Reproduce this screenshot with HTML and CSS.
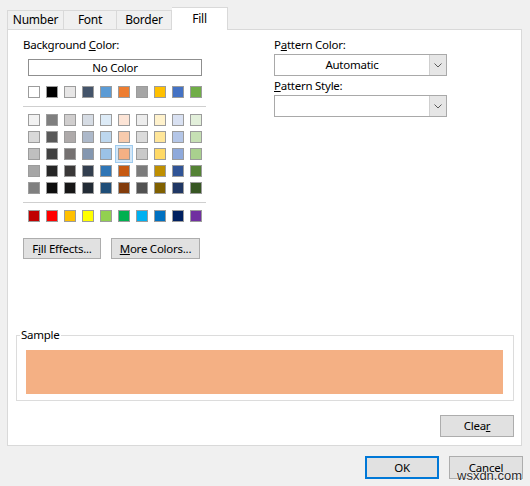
FILE: index.html
```html
<!DOCTYPE html>
<html>
<head>
<meta charset="utf-8">
<link rel="stylesheet" href="styles.css">
</head>
<body>
<div class="dialog">
  <div class="tabs">
    <div class="tab tab-first tab-number">Number</div>
    <div class="tab tab-font">Font</div>
    <div class="tab tab-border">Border</div>
    <div class="tab tab-fill active">Fill</div>
  </div>
  <div class="panel">
    <div class="columns">
      <div class="bg-col">
        <div class="label">Background <u>C</u>olor:</div>
        <button class="nocolor">No Color</button>
        <div class="swrow row-top">
          <span class="sw" style="background:#ffffff"></span>
          <span class="sw" style="background:#000000"></span>
          <span class="sw" style="background:#e7e6e6"></span>
          <span class="sw" style="background:#44546a"></span>
          <span class="sw" style="background:#5b9bd5"></span>
          <span class="sw" style="background:#ed7d31"></span>
          <span class="sw" style="background:#a5a5a5"></span>
          <span class="sw" style="background:#ffc000"></span>
          <span class="sw" style="background:#4472c4"></span>
          <span class="sw" style="background:#70ad47"></span>
        </div>
        <div class="sep"></div>
        <div class="grid">
          <span class="sw" style="background:#f2f2f2"></span>
          <span class="sw" style="background:#7f7f7f"></span>
          <span class="sw" style="background:#d0cece"></span>
          <span class="sw" style="background:#d6dce4"></span>
          <span class="sw" style="background:#ddebf7"></span>
          <span class="sw" style="background:#fce4d6"></span>
          <span class="sw" style="background:#ededed"></span>
          <span class="sw" style="background:#fff2cc"></span>
          <span class="sw" style="background:#d9e1f2"></span>
          <span class="sw" style="background:#e2efda"></span>

          <span class="sw" style="background:#d9d9d9"></span>
          <span class="sw" style="background:#595959"></span>
          <span class="sw" style="background:#aeaaaa"></span>
          <span class="sw" style="background:#adb9ca"></span>
          <span class="sw" style="background:#bdd7ee"></span>
          <span class="sw" style="background:#f8cbad"></span>
          <span class="sw" style="background:#dbdbdb"></span>
          <span class="sw" style="background:#ffe699"></span>
          <span class="sw" style="background:#b4c6e7"></span>
          <span class="sw" style="background:#c6e0b4"></span>

          <span class="sw" style="background:#bfbfbf"></span>
          <span class="sw" style="background:#404040"></span>
          <span class="sw" style="background:#757171"></span>
          <span class="sw" style="background:#8497b0"></span>
          <span class="sw" style="background:#9bc2e6"></span>
          <span class="sw sel" style="background:#f4b084"></span>
          <span class="sw" style="background:#c9c9c9"></span>
          <span class="sw" style="background:#ffd966"></span>
          <span class="sw" style="background:#8ea9db"></span>
          <span class="sw" style="background:#a9d08e"></span>

          <span class="sw" style="background:#a6a6a6"></span>
          <span class="sw" style="background:#262626"></span>
          <span class="sw" style="background:#3a3838"></span>
          <span class="sw" style="background:#333f4f"></span>
          <span class="sw" style="background:#2f75b5"></span>
          <span class="sw" style="background:#c65911"></span>
          <span class="sw" style="background:#7b7b7b"></span>
          <span class="sw" style="background:#bf8f00"></span>
          <span class="sw" style="background:#305496"></span>
          <span class="sw" style="background:#548235"></span>

          <span class="sw" style="background:#808080"></span>
          <span class="sw" style="background:#0d0d0d"></span>
          <span class="sw" style="background:#171616"></span>
          <span class="sw" style="background:#222b35"></span>
          <span class="sw" style="background:#1f4e78"></span>
          <span class="sw" style="background:#833c0c"></span>
          <span class="sw" style="background:#525252"></span>
          <span class="sw" style="background:#806000"></span>
          <span class="sw" style="background:#203764"></span>
          <span class="sw" style="background:#375623"></span>
        </div>
        <div class="sep"></div>
        <div class="swrow">
          <span class="sw" style="background:#c00000"></span>
          <span class="sw" style="background:#ff0000"></span>
          <span class="sw" style="background:#ffc000"></span>
          <span class="sw" style="background:#ffff00"></span>
          <span class="sw" style="background:#92d050"></span>
          <span class="sw" style="background:#00b050"></span>
          <span class="sw" style="background:#00b0f0"></span>
          <span class="sw" style="background:#0070c0"></span>
          <span class="sw" style="background:#002060"></span>
          <span class="sw" style="background:#7030a0"></span>
        </div>
        <div class="btnrow">
          <button class="btn btn-effects">F<u>i</u>ll Effects...</button>
          <button class="btn btn-more"><u>M</u>ore Colors...</button>
        </div>
      </div>
      <div class="pat-col">
        <div class="label">P<u>a</u>ttern Color:</div>
        <div class="combo">
          <span class="combo-val">Automatic</span>
          <span class="combo-arrow"><svg width="8" height="5" viewBox="0 0 8 5"><polyline points="0.5,0.5 4,4 7.5,0.5" fill="none" stroke="#5a5a5a" stroke-width="1"/></svg></span>
        </div>
        <div class="label label-2"><u>P</u>attern Style:</div>
        <div class="combo">
          <span class="combo-val"></span>
          <span class="combo-arrow"><svg width="8" height="5" viewBox="0 0 8 5"><polyline points="0.5,0.5 4,4 7.5,0.5" fill="none" stroke="#5a5a5a" stroke-width="1"/></svg></span>
        </div>
      </div>
    </div>
    <fieldset class="sample">
      <legend>Sample</legend>
      <div class="sample-fill"></div>
    </fieldset>
    <div class="clear-row">
      <button class="btn btn-clear">Clea<u>r</u></button>
    </div>
  </div>
  <div class="footer">
    <button class="btn btn-ok">OK</button>
    <button class="btn btn-cancel">Cancel</button>
  </div>
  <div class="watermark">wsxdn.com</div>
</div>
</body>
</html>
```
FILE: styles.css
```css
html, body {
  margin: 0;
  padding: 0;
  background: #f0f0f0;
}
body {
  font-family: "Noto Sans", "Open Sans", sans-serif;
  font-size: 11.5px;
  letter-spacing: -0.25px;
  color: #000;
}
.dialog {
  position: relative;
  width: 530px;
  height: 486px;
  overflow: hidden;
}
u { text-decoration: underline; text-underline-offset: 1px; }

/* tabs */
.tabs {
  display: flex;
  align-items: flex-end;
  height: 29px;
  padding-left: 7px;
  box-sizing: border-box;
}
.tab {
  box-sizing: border-box;
  height: 19px;
  border-top: 1px solid #d9d9d9;
  border-right: 1px solid #d9d9d9;
  display: flex;
  align-items: center;
  justify-content: center;
  line-height: 1;
  font-size: 12px;
}
.tab-first { border-left: 1px solid #d9d9d9; }
.tab-number { width: 57px; }
.tab-font { width: 53px; }
.tab-border { width: 55px; }
.tab-fill { width: 56px; }
.tab.active {
  height: 23px;
  margin-bottom: -1px;
  background: #fff;
  position: relative;
  z-index: 1;
  padding-bottom: 1px;
}

/* panel */
.panel {
  box-sizing: border-box;
  height: 417px;
  margin: 0 8px 0 7px;
  border: 1px solid #d9d9d9;
  background: #fff;
  display: flex;
  flex-direction: column;
  padding: 7px 7px 8px 8px;
}
.columns {
  display: flex;
  padding-left: 7px;
}
.bg-col { width: 183px; }
.pat-col { width: 173px; margin-left: 68px; }
.label {
  height: 16px;
  line-height: 16px;
  white-space: nowrap;
}
.label-2 { margin-top: 2px; }

.nocolor {
  display: block;
  box-sizing: border-box;
  margin: 6px 0 0 5px;
  width: 174px;
  height: 17px;
  padding: 0;
  border: 1px solid #8f8f8f;
  background: #fff;
  font: inherit;
  letter-spacing: inherit;
  line-height: 14px;
  color: #000;
}
.swrow {
  display: flex;
  gap: 6px;
  margin-left: 5px;
}
.row-top { margin-top: 10px; }
.sw {
  display: block;
  box-sizing: border-box;
  width: 12px;
  height: 12px;
  border: 1px solid #9c9c9c;
}
.sw.sel {
  box-shadow: 0 0 0 2px #d3e7f8, 0 0 0 3px #9fcbee;
}
.sep {
  height: 1px;
  background: #cfcfcf;
  margin: 8px 0 7px;
}
.grid {
  display: grid;
  grid-template-columns: repeat(10, 12px);
  column-gap: 6px;
  row-gap: 5px;
  margin-left: 5px;
}
.btnrow {
  display: flex;
  gap: 10px;
  margin-top: 16px;
}
.btn {
  box-sizing: border-box;
  height: 21px;
  padding: 0;
  background: #e1e1e1;
  border: 1px solid #adadad;
  font: inherit;
  letter-spacing: inherit;
  color: #000;
  line-height: 17px;
}
.btn-effects { width: 78px; }
.btn-more { width: 89px; }

.combo {
  display: flex;
  box-sizing: border-box;
  height: 22px;
  margin-top: 1px;
  border: 1px solid #a9a9a9;
  background: #fff;
}
.combo-val {
  flex: 1;
  text-align: center;
  line-height: 19px;
}
.combo-arrow {
  width: 16px;
  background: #e6e6e6;
  border-left: 1px solid #cfcfcf;
  display: flex;
  align-items: center;
  justify-content: center;
}

/* sample */
.sample {
  margin: auto 0 14px 0;
  padding: 0;
  border: 1px solid #dcdcdc;
  min-width: 0;
}
.sample legend {
  margin-left: 3px;
  padding: 0 1px;
  line-height: 16px;
  height: 16px;
}
.sample-fill {
  height: 44px;
  margin: 7px 10px 6px 9px;
  background: #f4b084;
}
.clear-row {
  display: flex;
  justify-content: flex-end;
}
.btn-clear { width: 74px; height: 22px; line-height: 18px; }

/* footer */
.footer {
  display: flex;
  justify-content: flex-end;
  gap: 10px;
  padding: 10px 7px 0 0;
}
.btn-ok, .btn-cancel { width: 74px; height: 23px; line-height: 17px; }
.btn-ok { border: 2px solid #0078d7; line-height: 16px; }

.watermark {
  position: absolute;
  left: 457px;
  top: 468px;
  font-family: "Liberation Sans", Arial, sans-serif;
  font-size: 13px;
  letter-spacing: 0;
  line-height: 16px;
  color: #2b2b2b;
  text-shadow: 0 0 2px #fff, 0 0 1px #fff;
}
```
